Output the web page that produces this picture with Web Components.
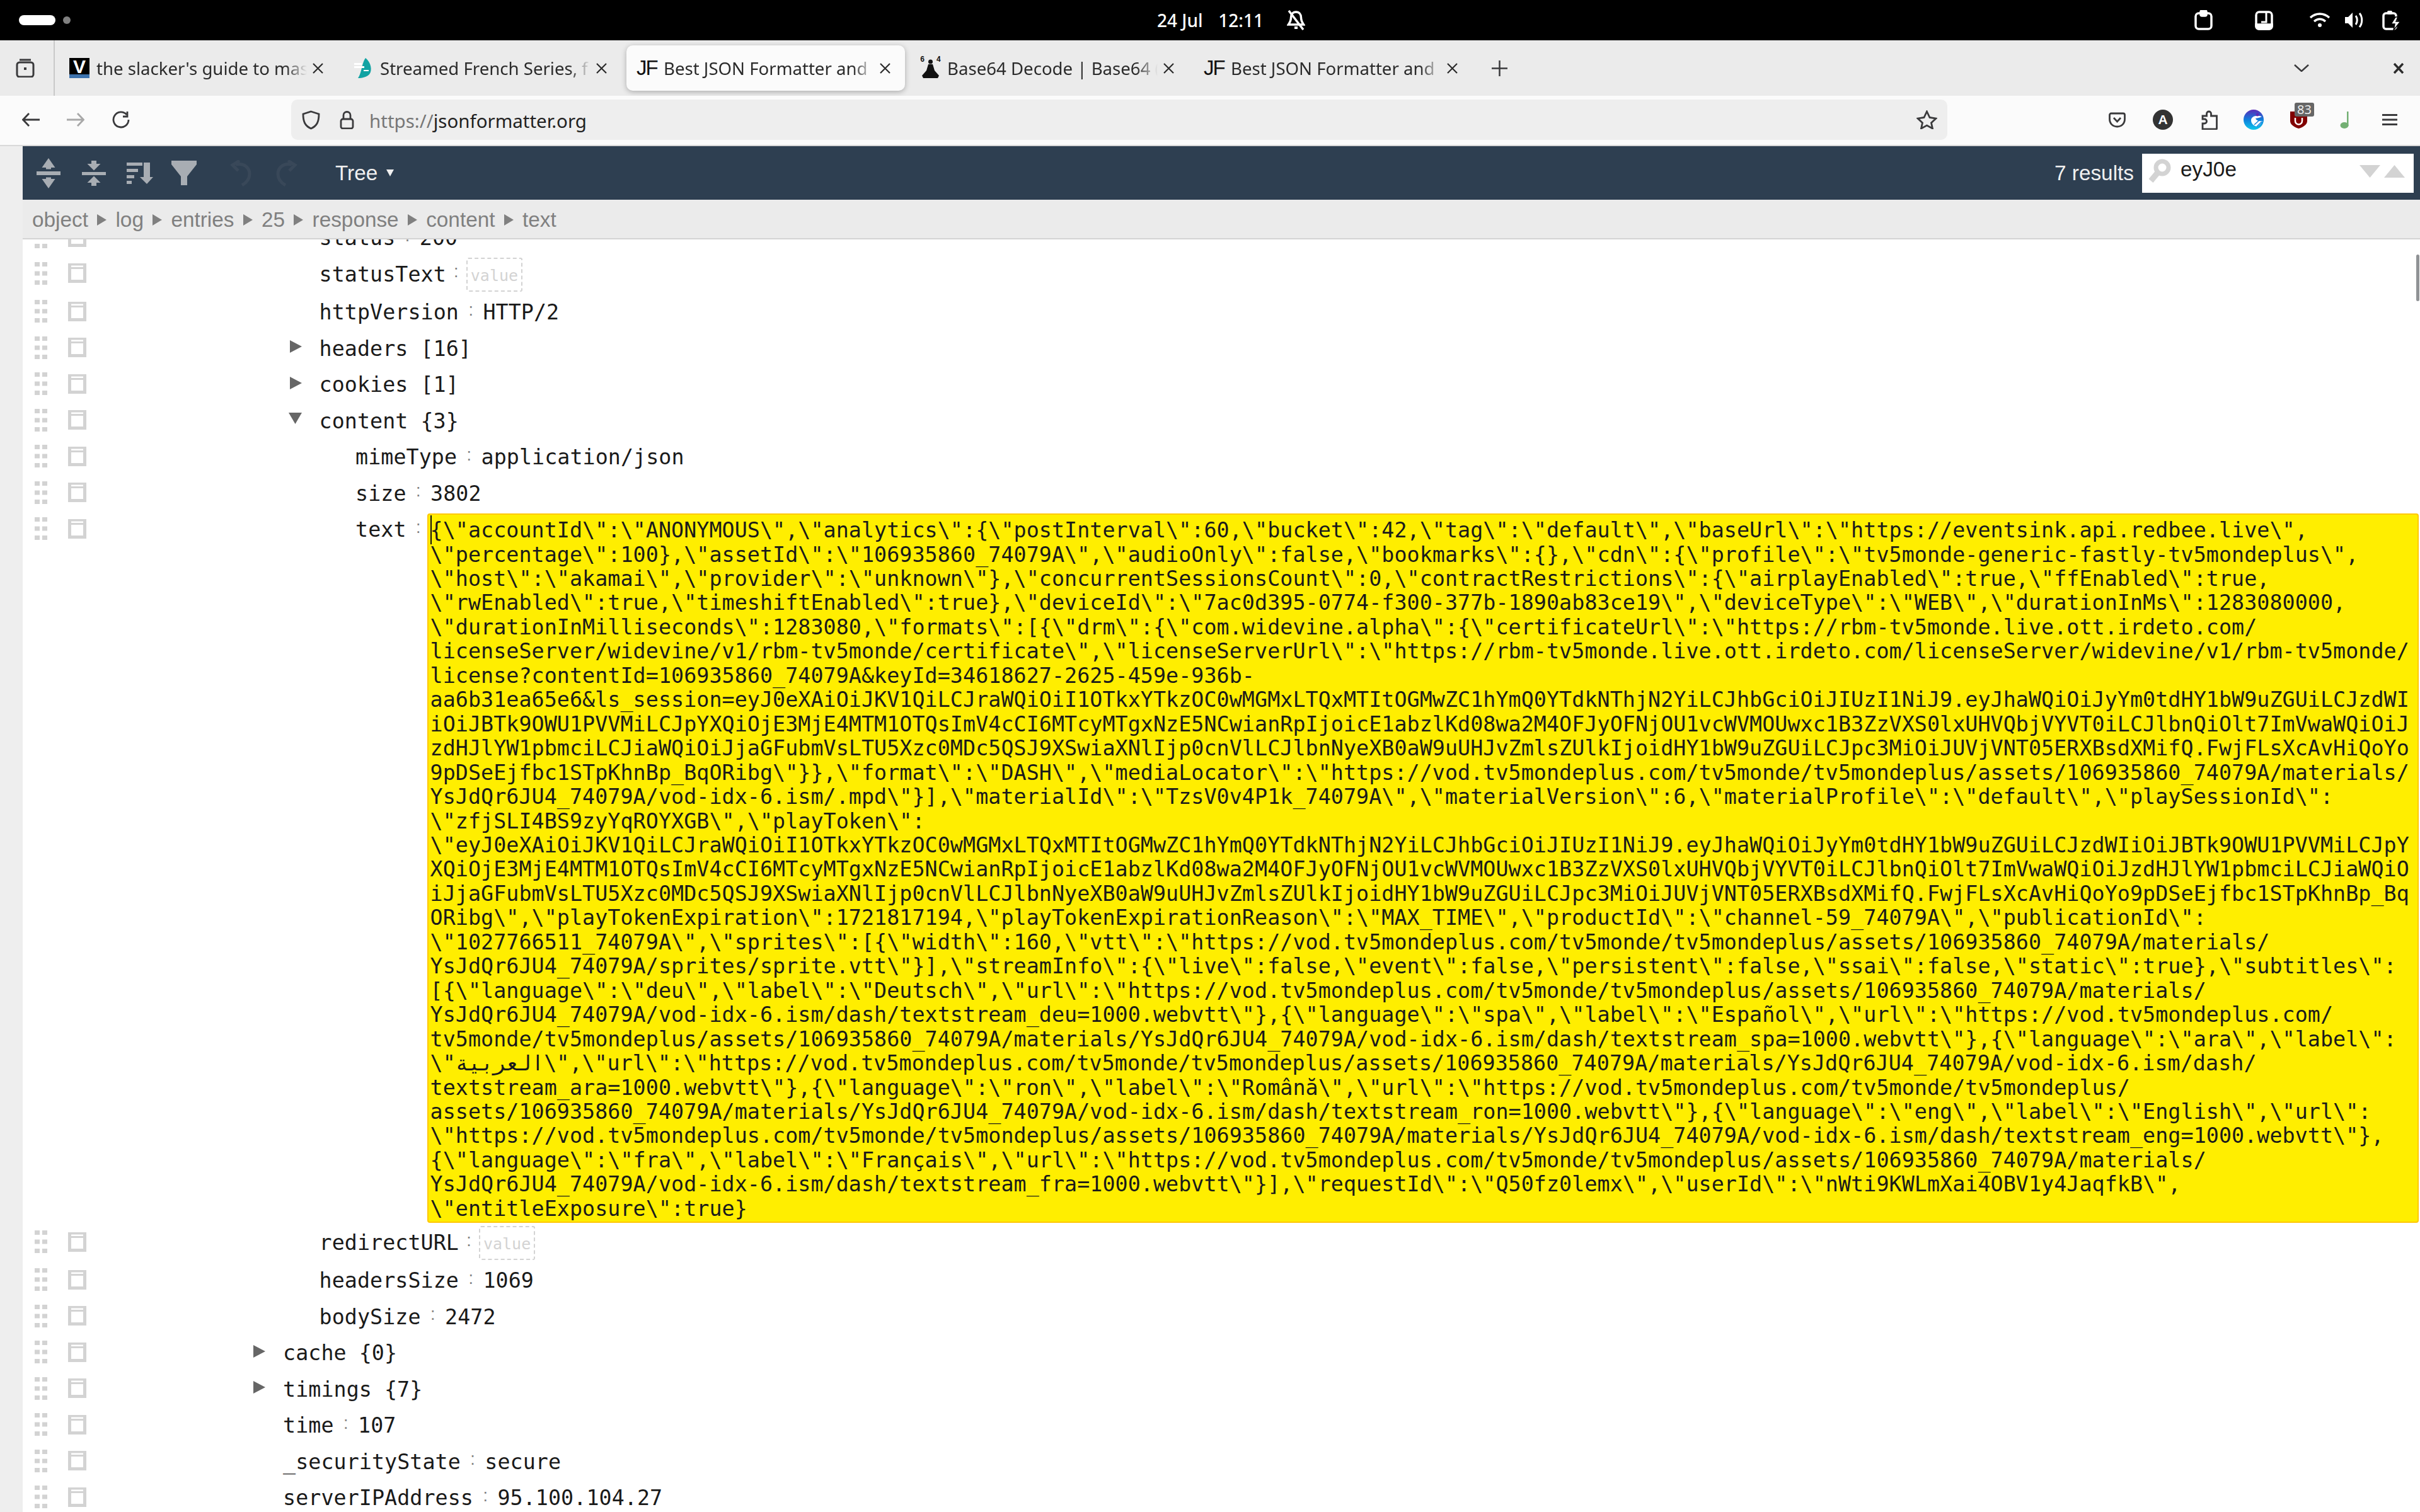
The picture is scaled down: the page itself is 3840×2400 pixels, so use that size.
<!DOCTYPE html>
<html lang="en">
<head>
<meta charset="utf-8">
<title>Best JSON Formatter</title>
<style>
  html, body { margin: 0; width: 3840px; height: 2400px; overflow: hidden; background: #fff; }
  body { display: flex; flex-direction: column; font-family: "Liberation Sans", sans-serif; }
  .fav-text { font-family: "Liberation Sans", sans-serif; font-size: 33px; color: #111; letter-spacing: -2px; line-height: 32px; width: 34px; display: block; }
  .fav-64 { position: absolute; left: 0; top: -4px; width: 33px; display: flex; justify-content: space-between; font: bold 12px "Liberation Mono", monospace; color: #111; }
</style>
</head>
<body>
<sys-bar></sys-bar>
<tab-strip>
  <browser-tab label="the slacker's guide to mas"><svg slot="fav" width="32" height="32" viewBox="0 0 32 32"><rect width="32" height="32" fill="#000"/><rect y="26" width="32" height="6" fill="#3d72ad"/></svg><span slot="favtext" style="position:absolute;left:0;top:-3px;width:32px;text-align:center;font:bold 30px 'Liberation Sans',sans-serif;color:#fff">V</span></browser-tab>
  <browser-tab label="Streamed French Series, f"><svg slot="fav" width="32" height="32" viewBox="0 0 32 32"><path d="M20 0C29 7 31 20 26 26 22 30 15 32 8 32 14 24 14 8 20 0z" fill="#11a3a3"/><path d="M2 8h12v3H2zM2 13h16v3H2zM17 19h8v2h-8z" fill="#fff"/></svg></browser-tab>
  <browser-tab active label="Best JSON Formatter and"><span slot="favtext" class="fav-text">JF</span></browser-tab>
  <browser-tab label="Base64 Decode | Base64 ("><svg slot="fav" width="33" height="32" viewBox="0 0 33 32"><circle cx="16.500" cy="6" r="3.500" fill="#111"/><path d="M13 10h7l3 10 7 8-2 4H5l-2-4 7-8z" fill="#111"/></svg><span slot="favtext" class="fav-64"><span>6</span><span>4</span></span></browser-tab>
  <browser-tab label="Best JSON Formatter and"><span slot="favtext" class="fav-text">JF</span></browser-tab>
</tab-strip>
<nav-bar></nav-bar>
<json-editor>
  <json-toolbar></json-toolbar>
  <json-crumbs></json-crumbs>
  <json-tree>
    <tree-row level="1" field="status" value="200"></tree-row>
    <tree-row level="1" field="statusText" empty></tree-row>
    <tree-row level="1" field="httpVersion" value="HTTP/2"></tree-row>
    <tree-row level="1" field="headers" count="[16]" toggle="closed"></tree-row>
    <tree-row level="1" field="cookies" count="[1]" toggle="closed"></tree-row>
    <tree-row level="1" field="content" count="{3}" toggle="open"></tree-row>
    <tree-row level="2" field="mimeType" value="application/json"></tree-row>
    <tree-row level="2" field="size" value="3802"></tree-row>
    <tree-row level="2" field="text"><match-text>{\"accountId\":\"ANONYMOUS\",\"analytics\":{\"postInterval\":60,\"bucket\":42,\"tag\":\"default\",\"baseUrl\":\"https://eventsink.api.redbee.live\",
\"percentage\":100},\"assetId\":\"106935860_74079A\",\"audioOnly\":false,\"bookmarks\":{},\"cdn\":{\"profile\":\"tv5monde-generic-fastly-tv5mondeplus\",
\"host\":\"akamai\",\"provider\":\"unknown\"},\"concurrentSessionsCount\":0,\"contractRestrictions\":{\"airplayEnabled\":true,\"ffEnabled\":true,
\"rwEnabled\":true,\"timeshiftEnabled\":true},\"deviceId\":\"7ac0d395-0774-f300-377b-1890ab83ce19\",\"deviceType\":\"WEB\",\"durationInMs\":1283080000,
\"durationInMilliseconds\":1283080,\"formats\":[{\"drm\":{\"com.widevine.alpha\":{\"certificateUrl\":\"https://rbm-tv5monde.live.ott.irdeto.com/
licenseServer/widevine/v1/rbm-tv5monde/certificate\",\"licenseServerUrl\":\"https://rbm-tv5monde.live.ott.irdeto.com/licenseServer/widevine/v1/rbm-tv5monde/
license?contentId=106935860_74079A&amp;keyId=34618627-2625-459e-936b-
aa6b31ea65e6&amp;ls_session=eyJ0eXAiOiJKV1QiLCJraWQiOiI1OTkxYTkzOC0wMGMxLTQxMTItOGMwZC1hYmQ0YTdkNThjN2YiLCJhbGciOiJIUzI1NiJ9.eyJhaWQiOiJyYm0tdHY1bW9uZGUiLCJzdWI
iOiJBTk9OWU1PVVMiLCJpYXQiOjE3MjE4MTM1OTQsImV4cCI6MTcyMTgxNzE5NCwianRpIjoicE1abzlKd08wa2M4OFJyOFNjOU1vcWVMOUwxc1B3ZzVXS0lxUHVQbjVYVT0iLCJlbnQiOlt7ImVwaWQiOiJ
zdHJlYW1pbmciLCJiaWQiOiJjaGFubmVsLTU5Xzc0MDc5QSJ9XSwiaXNlIjp0cnVlLCJlbnNyeXB0aW9uUHJvZmlsZUlkIjoidHY1bW9uZGUiLCJpc3MiOiJUVjVNT05ERXBsdXMifQ.FwjFLsXcAvHiQoYo
9pDSeEjfbc1STpKhnBp_BqORibg\"}},\"format\":\"DASH\",\"mediaLocator\":\"https://vod.tv5mondeplus.com/tv5monde/tv5mondeplus/assets/106935860_74079A/materials/
YsJdQr6JU4_74079A/vod-idx-6.ism/.mpd\"}],\"materialId\":\"TzsV0v4P1k_74079A\",\"materialVersion\":6,\"materialProfile\":\"default\",\"playSessionId\":
\"zfjSLI4BS9zyYqROYXGB\",\"playToken\":
\"eyJ0eXAiOiJKV1QiLCJraWQiOiI1OTkxYTkzOC0wMGMxLTQxMTItOGMwZC1hYmQ0YTdkNThjN2YiLCJhbGciOiJIUzI1NiJ9.eyJhaWQiOiJyYm0tdHY1bW9uZGUiLCJzdWIiOiJBTk9OWU1PVVMiLCJpY
XQiOjE3MjE4MTM1OTQsImV4cCI6MTcyMTgxNzE5NCwianRpIjoicE1abzlKd08wa2M4OFJyOFNjOU1vcWVMOUwxc1B3ZzVXS0lxUHVQbjVYVT0iLCJlbnQiOlt7ImVwaWQiOiJzdHJlYW1pbmciLCJiaWQiO
iJjaGFubmVsLTU5Xzc0MDc5QSJ9XSwiaXNlIjp0cnVlLCJlbnNyeXB0aW9uUHJvZmlsZUlkIjoidHY1bW9uZGUiLCJpc3MiOiJUVjVNT05ERXBsdXMifQ.FwjFLsXcAvHiQoYo9pDSeEjfbc1STpKhnBp_Bq
ORibg\",\"playTokenExpiration\":1721817194,\"playTokenExpirationReason\":\"MAX_TIME\",\"productId\":\"channel-59_74079A\",\"publicationId\":
\"1027766511_74079A\",\"sprites\":[{\"width\":160,\"vtt\":\"https://vod.tv5mondeplus.com/tv5monde/tv5mondeplus/assets/106935860_74079A/materials/
YsJdQr6JU4_74079A/sprites/sprite.vtt\"}],\"streamInfo\":{\"live\":false,\"event\":false,\"persistent\":false,\"ssai\":false,\"static\":true},\"subtitles\":
[{\"language\":\"deu\",\"label\":\"Deutsch\",\"url\":\"https://vod.tv5mondeplus.com/tv5monde/tv5mondeplus/assets/106935860_74079A/materials/
YsJdQr6JU4_74079A/vod-idx-6.ism/dash/textstream_deu=1000.webvtt\"},{\"language\":\"spa\",\"label\":\"Español\",\"url\":\"https://vod.tv5mondeplus.com/
tv5monde/tv5mondeplus/assets/106935860_74079A/materials/YsJdQr6JU4_74079A/vod-idx-6.ism/dash/textstream_spa=1000.webvtt\"},{\"language\":\"ara\",\"label\":
\"العربية\",\"url\":\"https://vod.tv5mondeplus.com/tv5monde/tv5mondeplus/assets/106935860_74079A/materials/YsJdQr6JU4_74079A/vod-idx-6.ism/dash/
textstream_ara=1000.webvtt\"},{\"language\":\"ron\",\"label\":\"Română\",\"url\":\"https://vod.tv5mondeplus.com/tv5monde/tv5mondeplus/
assets/106935860_74079A/materials/YsJdQr6JU4_74079A/vod-idx-6.ism/dash/textstream_ron=1000.webvtt\"},{\"language\":\"eng\",\"label\":\"English\",\"url\":
\"https://vod.tv5mondeplus.com/tv5monde/tv5mondeplus/assets/106935860_74079A/materials/YsJdQr6JU4_74079A/vod-idx-6.ism/dash/textstream_eng=1000.webvtt\"},
{\"language\":\"fra\",\"label\":\"Français\",\"url\":\"https://vod.tv5mondeplus.com/tv5monde/tv5mondeplus/assets/106935860_74079A/materials/
YsJdQr6JU4_74079A/vod-idx-6.ism/dash/textstream_fra=1000.webvtt\"}],\"requestId\":\"Q50fz0lemx\",\"userId\":\"nWti9KWLmXai4OBV1y4JaqfkB\",
\"entitleExposure\":true}</match-text></tree-row>
    <tree-row level="1" field="redirectURL" empty></tree-row>
    <tree-row level="1" field="headersSize" value="1069"></tree-row>
    <tree-row level="1" field="bodySize" value="2472"></tree-row>
    <tree-row level="0" field="cache" count="{0}" toggle="closed"></tree-row>
    <tree-row level="0" field="timings" count="{7}" toggle="closed"></tree-row>
    <tree-row level="0" field="time" value="107"></tree-row>
    <tree-row level="0" field="_securityState" value="secure"></tree-row>
    <tree-row level="0" field="serverIPAddress" value="95.100.104.27"></tree-row>
  </json-tree>
</json-editor>

<script>
'use strict';

const MONO = '"DejaVu Sans Mono", "DejaVu Sans", monospace';

class SysBar extends HTMLElement {
  connectedCallback() {
    this.attachShadow({mode: 'open'});
    this.shadowRoot.innerHTML = `
      <style>
        :host { display: flex; align-items: center; height: 64px; background: #000; flex: none; color: #fff; }
        .pill { width: 58px; height: 16px; margin-left: 30px; border-radius: 8px; background: #fff; }
        .dot { width: 12px; height: 12px; margin-left: 12px; border-radius: 50%; background: #808080; }
        .clock { width: 169px; margin-left: 1724px; display: flex; justify-content: space-between;
          font: 500 28px "Noto Sans", sans-serif; white-space: nowrap; }
        svg { display: block; flex: none; fill: none; stroke: #fff; stroke-width: 3.5; }
      </style>
      <div class="pill"></div>
      <div class="dot"></div>
      <div class="clock"><span>24 Jul</span><span>12:11</span></div>
      <svg style="margin-left:37px" width="29" height="32" viewBox="0 0 29 32"><path d="M14.500 3c-5 0-8 4-8 9 0 5-2 8-4 11h24c-2-3-4-6-4-11 0-5-3-9-8-9z"/><path d="M12 28h5" stroke-width="4"/><path d="M3 1l23 30"/></svg>
      <svg style="margin-left:1411px" width="29" height="32" viewBox="0 0 29 32"><rect x="2" y="5" width="25" height="25" rx="5"/><rect x="10" y="1" width="9" height="8" rx="2" fill="#fff"/></svg>
      <svg style="margin-left:67px" width="29" height="32" viewBox="0 0 29 32"><rect x="2" y="3" width="25" height="27" rx="5"/><path d="M2 23h25v3a4 4 0 0 1-4 4H6a4 4 0 0 1-4-4z" fill="#fff"/><path d="M18 3v16h-8" stroke-width="3"/></svg>
      <svg style="margin-left:57px" width="34" height="24" viewBox="0 0 34 24"><path d="M2 8C11 0 23 0 32 8"/><path d="M8 14c6-5 12-5 18 0"/><circle cx="17" cy="20" r="3" fill="#fff" stroke="none"/></svg>
      <svg style="margin-left:22px" width="32" height="28" viewBox="0 0 32 28"><path d="M1 9h5l7-7v24l-7-7H1z" fill="#fff" stroke="none"/><path d="M18 7c3 4 3 10 0 14" stroke-width="3"/><path d="M24 3c5 6 5 16 0 22" stroke-width="3"/></svg>
      <svg style="margin-left:28px" width="30" height="32" viewBox="0 0 30 32"><rect x="2" y="5" width="20" height="25" rx="4"/><rect x="8" y="1" width="8" height="6" rx="2" fill="#fff" stroke="none"/><path d="M21 11l-7 11h6l-2 10 11-14h-7l3-7z" fill="#fff" stroke="#000" stroke-width="1.500"/></svg>
    `;
  }
}
customElements.define('sys-bar', SysBar);

class TabStrip extends HTMLElement {
  connectedCallback() {
    this.attachShadow({mode: 'open'});
    this.shadowRoot.innerHTML = `
      <style>
        :host { display: flex; align-items: center; height: 88px; background: #ebebeb; flex: none; color: #2b2b2b; }
        .sep { width: 2px; height: 88px; margin-left: 30px; background: #c9c9c9; }
        .tabs { display: flex; gap: 7.500px; margin-left: 6.500px; }
        svg { display: block; flex: none; }
      </style>
      <svg style="margin-left:25px" width="30" height="30" viewBox="0 0 30 30" fill="none" stroke="#3a3a3c" stroke-width="3"><rect x="2" y="6" width="26" height="23" rx="4"/><path d="M6 2h18"/><rect x="13" y="14" width="4" height="4" fill="#3a3a3c" stroke="none"/></svg>
      <div class="sep"></div>
      <div class="tabs"><slot></slot></div>
      <svg style="margin-left:31px" width="25" height="25" viewBox="0 0 25 25" stroke="#3a3a3c" stroke-width="2.500"><path d="M12.500 0v25M0 12.500h25"/></svg>
      <svg style="margin-left:1248px" width="24" height="12" viewBox="0 0 24 12" fill="none" stroke="#3a3a3c" stroke-width="2.500"><path d="M1 1l11 10L23 1"/></svg>
      <svg style="margin-left:134px" width="16" height="17" viewBox="0 0 16 17" stroke="#2b2b2b" stroke-width="3.500"><path d="M1 1l14 15M15 1L1 16"/></svg>
    `;
  }
}
customElements.define('tab-strip', TabStrip);

class BrowserTab extends HTMLElement {
  connectedCallback() {
    this.attachShadow({mode: 'open'});
    this.shadowRoot.innerHTML = `
      <style>
        :host { display: flex; align-items: center; box-sizing: border-box; width: 442.500px; height: 72px;
          padding-left: 16.500px; border-radius: 10px; font: 27.600px "Noto Sans", sans-serif; }
        :host([active]) { background: #fbfbfb; box-shadow: 0 2px 8px rgba(0,0,0,.28); }
        .fav { position: relative; width: 34px; height: 32px; flex: none; }
        .label { width: 334px; margin-left: 9px; flex: none; white-space: nowrap;
          -webkit-mask-image: linear-gradient(to right, #000 90%, transparent); mask-image: linear-gradient(to right, #000 90%, transparent); }
        svg.x { margin-left: 9px; flex: none; display: block; }
      </style>
      <span class="fav"><slot name="fav"></slot><slot name="favtext"></slot></span>
      <span class="label"></span>
      <svg class="x" width="17" height="17" viewBox="0 0 17 17" stroke="#2b2b2b" stroke-width="2.200"><path d="M1 1l15 15M16 1L1 16"/></svg>
    `;
    this.shadowRoot.querySelector('.label').textContent = this.getAttribute('label');
  }
}
customElements.define('browser-tab', BrowserTab);

class NavBar extends HTMLElement {
  connectedCallback() {
    this.attachShadow({mode: 'open'});
    this.shadowRoot.innerHTML = `
      <style>
        :host { display: flex; align-items: center; box-sizing: border-box; height: 80px; padding-bottom: 2px;
          background: #fbfbfb; border-bottom: 2px solid #d9d9d9; flex: none; }
        svg { display: block; flex: none; fill: none; stroke: #3a3a3c; stroke-width: 2.800; }
        .url { display: flex; align-items: center; width: 2628px; height: 64px; margin-left: 256px; box-sizing: border-box;
          border-radius: 10px; background: #eee; padding: 0 16px 0 17px; }
        .addr { margin-left: 24px; padding-top: 3px; font: 29.500px "Noto Sans", sans-serif; color: #222; }
        .addr i { font-style: normal; color: #777; }
        .ublock { position: relative; width: 27px; height: 27px; margin-left: 42px; flex: none; }
        .badge { position: absolute; left: 7px; top: -14px; width: 31px; height: 22px; border-radius: 3px; background: #666; color: #eee;
          font: 20px/22px "Noto Sans", sans-serif; text-align: center; }
        .acc { width: 32px; height: 32px; margin-left: 43px; border-radius: 50%; background: #333; color: #fff;
          font: bold 21px/32px "Liberation Sans", sans-serif; text-align: center; flex: none; }
      </style>
      <svg style="margin-left:35px" width="28" height="22" viewBox="0 0 28 22"><path d="M28 11H2M11 1L1.500 11 11 21"/></svg>
      <svg style="margin-left:43px;stroke:#a8a8a8" width="28" height="22" viewBox="0 0 28 22"><path d="M0 11h26M17 1l9.500 10L17 21"/></svg>
      <svg style="margin-left:44px" width="28" height="28" viewBox="0 0 28 28"><path d="M23 6a12 12 0 1 0 3 8"/><path d="M24 1v8h-7"/></svg>
      <div class="url">
        <svg width="29" height="31" viewBox="0 0 29 31"><path d="M14.500 2L27 6c0 12-3 19-12.500 23C5 25 2 18 2 6z"/></svg>
        <svg style="margin-left:31px" width="23" height="30" viewBox="0 0 23 30"><rect x="2" y="14" width="19" height="15" rx="3"/><path d="M6 14V8a5.500 5.500 0 0 1 11 0v6"/></svg>
        <span class="addr"><i>https://</i>jsonformatter.org</span>
        <svg style="margin-left:auto" width="33" height="30" viewBox="0 0 33 30"><path d="M16.500 2l4.500 9.500 10 1.500-7.500 7 2 9-9-5-9 5 2-9-7.500-7 10-1.500z"/></svg>
      </div>
      <svg style="margin-left:256px" width="27" height="25" viewBox="0 0 27 25"><path d="M4 2h19a2.500 2.500 0 0 1 2.500 2.500V11c0 7-5 12-12 12S1.500 18 1.500 11V4.500A2.500 2.500 0 0 1 4 2z"/><path d="M8 9l5.500 6L19 9"/></svg>
      <div class="acc">A</div>
      <svg style="margin-left:44px" width="27" height="31" viewBox="0 0 27 31"><path d="M13 2a3.500 3.500 0 0 1 3.500 3.500V9h9v20a1 1 0 0 1-1 1H3v-9h3a3.500 3.500 0 0 0 0-7H3V9h6.500V5.500A3.500 3.500 0 0 1 13 2z"/></svg>
      <svg style="margin-left:41px;stroke:none" width="32" height="32" viewBox="0 0 32 32"><defs><linearGradient id="bl" x1="0" y1="0" x2="0" y2="1"><stop offset="0" stop-color="#5b2bb8"/><stop offset=".5" stop-color="#0f7fdc"/><stop offset="1" stop-color="#10c8ec"/></linearGradient></defs><circle cx="16" cy="16" r="16" fill="url(#bl)"/><path d="M29 11c-9-3-17 0-17 6 0 5 4 9 10 10 3-2 6-5 8-9-6 1-10-1-11-4 3-1 7-1 10-3z" fill="#fff"/><path d="M17 24l9-8M21 27l8-8" stroke="#0f7fdc" stroke-width="1.500"/><circle cx="22" cy="8" r="2.500" fill="#5b2bb8"/></svg>
      <div class="ublock">
        <svg style="stroke:none" width="27" height="27" viewBox="0 0 27 27"><path d="M0 0h27v15C27 21 20 25 13.500 27 7 25 0 21 0 15z" fill="#800000"/><path d="M8 10v5a5.500 5.500 0 0 0 11 0v-5" fill="none" stroke="#fff" stroke-width="2.500"/></svg>
        <div class="badge">83</div>
      </div>
      <svg style="margin-left:52px;stroke:none" width="16" height="27" viewBox="0 0 16 27"><rect x="11" y="0" width="2.500" height="23" fill="#74b074"/><ellipse cx="7" cy="22" rx="6.500" ry="5" fill="#74b074"/></svg>
      <svg style="margin-left:51px" width="24" height="18" viewBox="0 0 24 18"><path d="M0 1.500h24M0 9h24M0 16.500h24" stroke-width="3"/></svg>
    `;
  }
}
customElements.define('nav-bar', NavBar);

class JsonEditor extends HTMLElement {
  connectedCallback() {
    this.attachShadow({mode: 'open'});
    this.shadowRoot.innerHTML = `
      <style>
        :host { display: flex; flex-direction: column; flex: 1; min-height: 0; padding-left: 36px; background: #eee; overflow: hidden; }
      </style>
      <slot></slot>
    `;
  }
}
customElements.define('json-editor', JsonEditor);

class JsonToolbar extends HTMLElement {
  connectedCallback() {
    this.attachShadow({mode: 'open'});
    this.shadowRoot.innerHTML = `
      <style>
        :host { display: flex; align-items: center; height: 85px; flex: none; padding-right: 10px; background: #2e3f51; color: #f0f0f0;
          font: 33.330px "Liberation Sans", sans-serif; }
        svg { display: block; flex: none; }
        .mode { margin-left: 55px; display: flex; align-items: center; gap: 14px; }
        .mode i { width: 0; height: 0; border: solid transparent; border-width: 11px 6.500px 0; border-top-color: #f0f0f0; }
        .results { margin-left: auto; }
        .search { position: relative; box-sizing: border-box; display: flex; align-items: flex-start; width: 431px; height: 62px; margin-left: 13px; background: #fff; color: #1a1a1a; padding: 8px 0 0 10px; }
        .search span { margin-left: 15px; margin-top: -2px; }
      </style>
      <svg style="margin-left:22px" width="38" height="48" viewBox="0 0 38 48" fill="#a8adb3"><path d="M19 0l10.500 15H23v2.500h-8V15H8.500z"/><rect y="21" width="38" height="6"/><path d="M15 30.500h8V33h6.500L19 48 8.500 33H15z"/></svg>
      <svg style="margin-left:34px" width="38" height="40" viewBox="0 0 38 40" fill="#a8adb3"><path d="M15 0h8v5h6.500L19 15.500 8.500 5H15z"/><rect y="18" width="38" height="5"/><path d="M19 24.500L29.500 35H23v5h-8v-5H8.500z"/></svg>
      <svg style="margin-left:33px" width="42" height="35" viewBox="0 0 42 35" fill="#a8adb3"><rect y="1" width="25" height="5"/><rect y="11" width="18" height="5"/><rect y="21" width="12" height="5"/><rect y="30" width="8" height="5"/><path d="M27 1h10v23h5L32 35 21 24h6z"/></svg>
      <svg style="margin-left:29px" width="40" height="39" viewBox="0 0 40 39" fill="#a8adb3"><path d="M0 0h40v6L25 25v14H15V25L0 6z"/></svg>
      <svg style="margin-left:48px" width="42" height="42" viewBox="0 0 42 42" fill="none" stroke="#394859" stroke-width="5"><path d="M14 7c14-3 22 6 22 15 0 8-5 14-12 18"/><path d="M20 1l-11 7 9 9"/></svg>
      <svg style="margin-left:33px" width="42" height="42" viewBox="0 0 42 42" fill="none" stroke="#394859" stroke-width="5"><path d="M28 7C14 4 6 13 6 22c0 8 5 14 12 18"/><path d="M22 1l11 7-9 9"/></svg>
      <div class="mode">Tree<i></i></div>
      <div class="results">7 results</div>
      <div class="search">
        <svg width="36" height="38" viewBox="0 0 36 38" fill="none" stroke="#d3d3d3"><circle cx="22" cy="14" r="10" stroke-width="7"/><path d="M14 23L4 35" stroke-width="9"/></svg>
        <span>eyJ0e</span>
        <svg style="position:absolute;left:345px;top:18px" width="33" height="20" viewBox="0 0 33 20" fill="#d3d3d3"><path d="M0 0h33L16.500 20z"/></svg>
        <svg style="position:absolute;left:384px;top:18px" width="33" height="20" viewBox="0 0 33 20" fill="#d3d3d3"><path d="M16.500 0L33 20H0z"/></svg>
      </div>
    `;
  }
}
customElements.define('json-toolbar', JsonToolbar);

class JsonCrumbs extends HTMLElement {
  connectedCallback() {
    this.attachShadow({mode: 'open'});
    let parts = ['object', 'log', 'entries', '25', 'response', 'content', 'text'];
    this.shadowRoot.innerHTML = `
      <style>
        :host { display: flex; align-items: center; gap: 14.250px; box-sizing: border-box; height: 63px; padding: 2px 0 0 15px; flex: none;
          position: relative; z-index: 1; background: #ebebeb; border-bottom: 2px solid #d3d3d3; color: #808080; font: 33.330px "Liberation Sans", sans-serif; }
        i { width: 0; height: 0; border: solid transparent; border-width: 9px 0 9px 15px; border-left-color: #808080; }
      </style>
      ${parts.map(p => `<span>${p}</span>`).join('<i></i>')}
    `;
  }
}
customElements.define('json-crumbs', JsonCrumbs);

class JsonTree extends HTMLElement {
  connectedCallback() {
    this.attachShadow({mode: 'open'});
    this.shadowRoot.innerHTML = `
      <style>
        :host { display: block; position: relative; flex: 1; min-height: 0; background: #fff; overflow: hidden; }
        .list { margin-top: -32.100px; }
        .thumb { position: absolute; right: 1px; top: 24px; width: 5px; height: 74px; border-radius: 3px; background: #8f9295; }
      </style>
      <div class="list"><slot></slot></div>
      <div class="thumb"></div>
    `;
  }
}
customElements.define('json-tree', JsonTree);

class TreeRow extends HTMLElement {
  connectedCallback() {
    let level = Number(this.getAttribute('level') || 0);
    let toggle = this.getAttribute('toggle');
    let count = this.getAttribute('count');
    let arrow = '';
    if (toggle == 'closed') {
      arrow = '<svg width="19" height="20" viewBox="0 0 19 20"><path d="M0 0l19 10L0 20z" fill="#666"/></svg>';
    } else if (toggle == 'open') {
      arrow = '<svg style="margin-left:-2px" width="21" height="18" viewBox="0 0 21 18"><path d="M0 0h21L10.500 18z" fill="#666"/></svg>';
    }
    let tail = '';
    if (count) {
      tail = `<span class="count">${count}</span>`;
    } else if (this.hasAttribute('empty')) {
      tail = '<span class="colon short">:</span><span class="empty">value</span>';
    } else {
      tail = `<span class="colon">:</span><span class="value">${this.getAttribute('value') || ''}</span><slot></slot>`;
    }
    this.attachShadow({mode: 'open'});
    this.shadowRoot.innerHTML = `
      <style>
        :host { display: flex; align-items: flex-start; min-height: 57.500px; padding-left: 19px; color: #1a1a1a;
          font: 33.330px/38.460px ${MONO}; letter-spacing: .065px; white-space: pre; }
        :host([empty]) { min-height: 60.200px; }
        svg { display: block; flex: none; }
        .drag { margin-top: 10.500px; }
        .menu { margin-top: 13px; margin-left: 33px; }
        .indent { flex: none; width: ${265 + level * 57.5}px; }
        .toggle { flex: none; width: 47.500px; padding-top: 17px; height: 20px; }
        .field { margin-left: -.5px; padding-top: 11.500px; }
        .value { padding-top: 11.500px; }
        .count { padding-top: 11.500px; margin-left: 20px; }
        .colon { flex: none; width: 38.500px; text-align: center; padding-top: 7px; color: #808080; font: 27px/38px "Liberation Sans", sans-serif; }
        .colon.short { width: 32px; }
        .empty { box-sizing: border-box; width: 89px; height: 54px; margin-top: 3.500px; padding: 8px 0 0 5px;
          border: 2.500px dashed #d3d3d3; border-radius: 3px; color: #d3d3d3; font-size: 25px; letter-spacing: 0; }
      </style>
      <svg class="drag" width="20" height="36" viewBox="0 0 20 36" fill="#d3d3d3"><rect width="8" height="7"/><rect x="12" width="8" height="7"/><rect y="14.500" width="8" height="7"/><rect x="12" y="14.500" width="8" height="7"/><rect y="29" width="8" height="7"/><rect x="12" y="29" width="8" height="7"/></svg>
      <svg class="menu" width="29" height="31" viewBox="0 0 29 31" fill="#d3d3d3"><path fill-rule="evenodd" d="M0 0h29v31H0zM5 9v17h19V9zM5 3.500v2.500h19V3.500z"/></svg>
      <span class="indent"></span>
      <span class="toggle">${arrow}</span>
      <span class="field">${this.getAttribute('field')}</span>
      ${tail}
    `;
  }
}
customElements.define('tree-row', TreeRow);

class MatchText extends HTMLElement {
  connectedCallback() {
    this.attachShadow({mode: 'open'});
    this.shadowRoot.innerHTML = `
      <style>
        :host { display: block; position: relative; box-sizing: border-box; width: 3160px; margin: 4.500px 0 2px -5px; padding: 6px 2.500px .5px;
          background: #fe0; border: 2.500px solid #ffc700; border-radius: 4px; white-space: normal; }
        .lines { white-space: pre; }
        .caret { position: absolute; left: 2.500px; top: 1px; width: 2.500px; height: 46px; background: #111; }
      </style>
      <div class="caret"></div>
      <div class="lines"><slot></slot></div>
    `;
  }
}
customElements.define('match-text', MatchText);
</script>
</body>
</html>
